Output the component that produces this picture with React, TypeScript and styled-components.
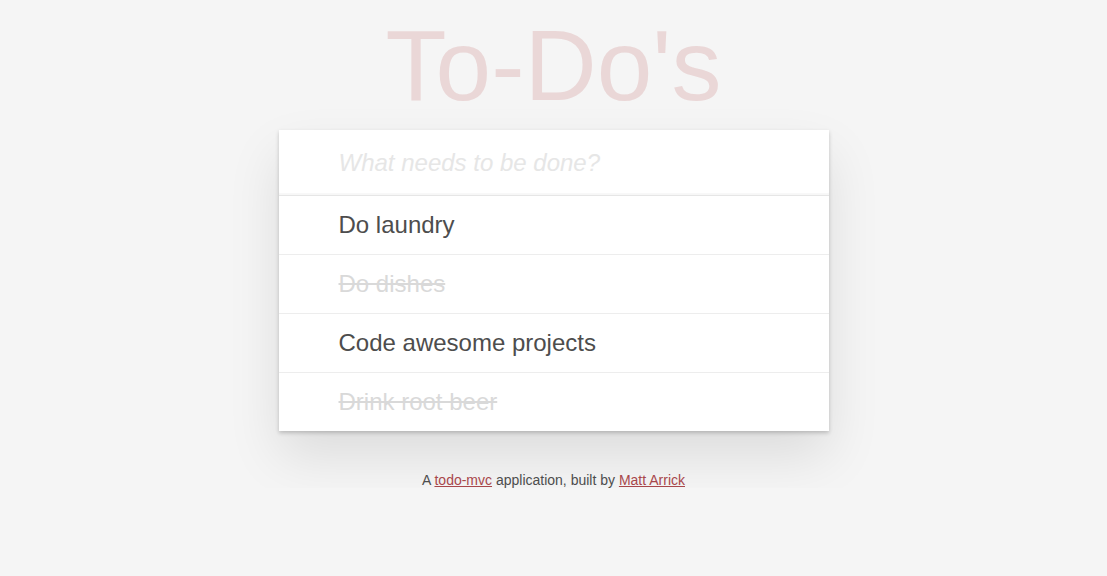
import React from 'react';
import styled, {createGlobalStyle} from "styled-components";

type TodoType = {
    id: number
    title: string
    completed: boolean
}

const todos: TodoType[] = [
    {id: 1, title: "Do laundry", completed: false},
    {id: 2, title: "Do dishes", completed: true},
    {id: 3, title: "Code awesome projects", completed: false},
    {id: 4, title: "Drink root beer", completed: true},
]

const GlobalStyle = createGlobalStyle`
  * {
    box-sizing: border-box;
  }

  body {
    margin: 0;
    padding: 0;
    background: #f5f5f5;
    color: #4d4d4d;
    font-family: "Liberation Sans", Arial, sans-serif;
    -webkit-font-smoothing: antialiased;
  }
`

export default function App() {
    return (
        <>
            <GlobalStyle/>
            <Page>
                <Title>To-Do's</Title>
                <TodoApp>
                    <NewTodo placeholder="What needs to be done?"/>
                    <TodoList>
                        {todos.map(todo => (
                            <TodoItem key={todo.id} completed={todo.completed}>
                                {todo.title}
                            </TodoItem>
                        ))}
                    </TodoList>
                </TodoApp>
                <Info>
                    A <InfoLink href={"#"}>todo-mvc</InfoLink> application, built by <InfoLink href={"#"}>Matt Arrick</InfoLink>
                </Info>
            </Page>
        </>
    );
};

const Page = styled.div`
  width: 550px;
  margin: 0 auto;
  padding-top: 9px;
`

const Title = styled.h1`
  margin: 0 0 9px;
  font-size: 100px;
  line-height: 112px;
  font-weight: 100;
  text-align: center;
  color: rgba(175, 47, 47, 0.15);
`

const TodoApp = styled.section`
  background: #fff;
  box-shadow: 0 2px 4px 0 rgba(0, 0, 0, 0.2),
  0 25px 50px 0 rgba(0, 0, 0, 0.1);
`

const NewTodo = styled.input`
  display: block;
  width: 100%;
  height: 65px;
  margin: 0;
  padding: 16px 16px 16px 60px;
  border: none;
  outline: none;
  background: transparent;
  font-family: inherit;
  font-size: 24px;
  color: #4d4d4d;
  box-shadow: inset 0 -2px 1px rgba(0, 0, 0, 0.03);

  &::placeholder {
    font-style: italic;
    color: #e6e6e6;
  }
`

const TodoList = styled.ul`
  margin: 0;
  padding: 0;
  list-style: none;
  border-top: 1px solid #e6e6e6;
`

const TodoItem = styled.li<{completed: boolean}>`
  padding: 15px 60px;
  font-size: 24px;
  line-height: 28px;
  color: ${props => props.completed ? "#d9d9d9" : "#4d4d4d"};
  text-decoration: ${props => props.completed ? "line-through" : "none"};
  border-bottom: 1px solid #ededed;

  &:last-child {
    border-bottom: none;
  }
`

const Info = styled.footer`
  margin-top: 41px;
  font-size: 14px;
  line-height: 16px;
  text-align: center;
  color: #4d4d4d;
`

const InfoLink = styled.a`
  color: #a8474b;
  text-decoration: underline;
`
